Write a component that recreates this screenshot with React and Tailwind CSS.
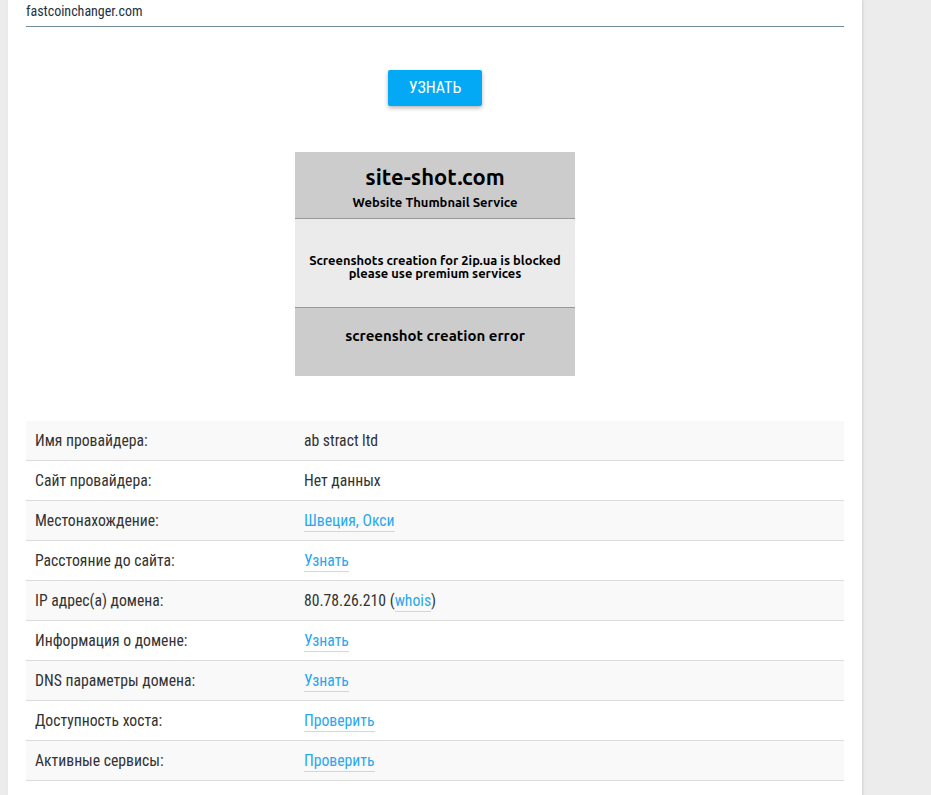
const rows = [
  { label: "Имя провайдера:", value: "ab stract ltd" },
  { label: "Сайт провайдера:", value: "Нет данных" },
  { label: "Местонахождение:", link: "Швеция, Окси" },
  { label: "Расстояние до сайта:", link: "Узнать" },
  { label: "IP адрес(а) домена:", ip: "80.78.26.210" },
  { label: "Информация о домене:", link: "Узнать" },
  { label: "DNS параметры домена:", link: "Узнать" },
  { label: "Доступность хоста:", link: "Проверить" },
  { label: "Активные сервисы:", link: "Проверить" },
];

const cond = { fontFamily: '"Roboto Condensed", "Liberation Sans Narrow", "DejaVu Sans Condensed", sans-serif' };
const shot = { fontFamily: '"Ubuntu", "DejaVu Sans", sans-serif' };

const Link = ({ children }) => (
  <a href="#" className="text-[#29a8f0] border-b border-[#b3e1fb] pb-[1px]">
    {children}
  </a>
);

export default function App() {
  return (
    <div className="min-h-[795px] bg-[#ececec] pl-2 flex" style={cond}>
      <div className="w-[854px] bg-white shadow-[1px_0_2px_rgba(0,0,0,0.12)] px-[18px] pb-4">
        <div className="border-b border-[#6f8a99] h-[27px] pt-[2px] text-[14px] text-[#1d3145] leading-[18px]">
          fastcoinchanger.com
        </div>

        <div className="flex justify-center pt-[43px]">
          <button className="w-[94px] h-[36px] bg-[#03a9f4] text-white text-[16px] rounded-[2px] shadow-[0_2px_4px_rgba(0,0,0,0.3)]">
            УЗНАТЬ
          </button>
        </div>

        <div className="flex justify-center pt-[46px]">
          <div className="w-[280px] h-[224px] flex flex-col text-black font-bold text-center" style={shot}>
            <div className="h-[67px] bg-[#cccccc] border-b border-[#999] flex flex-col items-center pt-[11px]">
              <div className="text-[22px] leading-[28px]">site-shot.com</div>
              <div className="text-[13px] leading-[14px] mt-[4px]">Website Thumbnail Service</div>
            </div>
            <div className="h-[89px] bg-[#ebebeb] border-b border-[#999] flex flex-col justify-center text-[12.9px] leading-[13.5px] pt-[8px]">
              <div>Screenshots creation for 2ip.ua is blocked</div>
              <div>please use premium services</div>
            </div>
            <div className="flex-1 bg-[#cccccc] pt-[19px] text-[15px] leading-[18px]">
              screenshot creation error
            </div>
          </div>
        </div>

        <div className="mt-[45px] text-[15.7px] text-[#333]">
          {rows.map((r, i) => (
            <div
              key={i}
              className={`flex h-[40px] items-center border-b border-[#dcdcdc] ${i % 2 === 0 ? "bg-[#f9f9f9]" : "bg-white"}`}
            >
              <div className="w-[278px] pl-[9px]">{r.label}</div>
              <div>
                {r.value}
                {r.link && <Link>{r.link}</Link>}
                {r.ip && (
                  <>
                    {r.ip} (<Link>whois</Link>)
                  </>
                )}
              </div>
            </div>
          ))}
        </div>
      </div>
    </div>
  );
}
